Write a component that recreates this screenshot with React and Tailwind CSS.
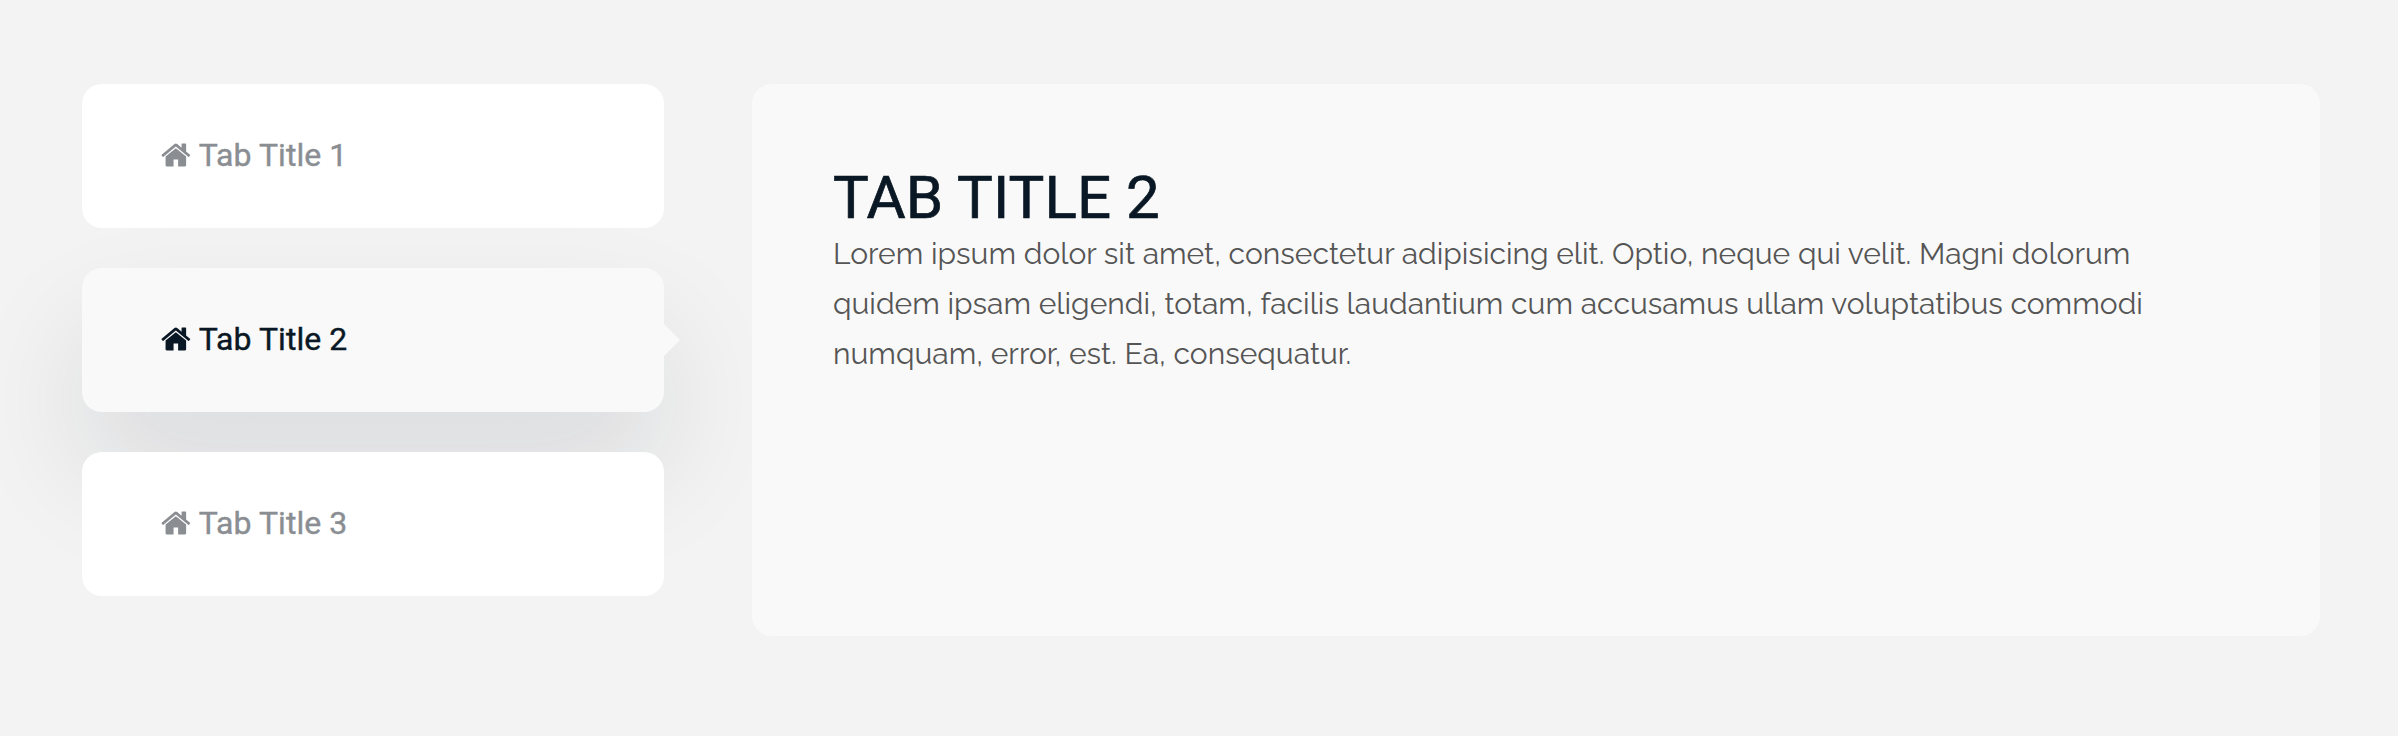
const tabs = ["Tab Title 1", "Tab Title 2", "Tab Title 3"];

function HomeIcon() {
  return (
    <svg viewBox="64 0 1664 1792" className="h-8 w-[29.7px] shrink-0" fill="currentColor" aria-hidden="true">
      <path d="M1472 992v480q0 26-19 45t-45 19h-384v-384h-256v384h-384q-26 0-45-19t-19-45v-480q0-1 .5-3t.5-3l575-474 575 474q1 2 1 6zm223-69l-62 74q-8 9-21 11h-3q-13 0-21-7l-692-577-692 577q-12 8-24 7-13-2-21-11l-62-74q-8-10-7-23.5t11-21.5l719-599q32-26 76-26t76 26l244 204v-195q0-14 9-23t23-9h192q14 0 23 9t9 23v408l219 182q10 8 11 21.5t-7 23.5z" />
    </svg>
  );
}

function Tab({ title, active }) {
  return (
    <button
      type="button"
      className={
        active
          ? "relative flex h-36 items-center gap-2 rounded-[20px] bg-[#f9f9f9] pl-[79px] pr-20 pb-[3px] text-[#091824] shadow-[0_60px_120px_0_rgba(14,26,46,0.11)]"
          : "relative flex h-36 items-center gap-2 rounded-[20px] bg-white pl-[79px] pr-20 pb-[3px] text-[#8a8e93]"
      }
    >
      <HomeIcon />
      <span className="font-['Roboto',sans-serif] text-[32px] leading-[38px] tracking-[0.05px] [-webkit-text-stroke:0.4px_currentColor]">{title}</span>
      {active && (
        <svg viewBox="0 0 16 32" className="absolute left-full top-14 h-8 w-4" aria-hidden="true">
          <path d="M0 0L16 16L0 32Z" fill="#f9f9f9" />
        </svg>
      )}
    </button>
  );
}

export default function App() {
  return (
    <div className="flex h-[736px] items-start gap-[88px] overflow-hidden bg-[#f3f3f3] pl-[82px] pt-[84px]">
      <div className="flex w-[582px] flex-col gap-10">
        {tabs.map((title, i) => (
          <Tab key={title} title={title} active={i === 1} />
        ))}
      </div>
      <div className="relative h-[552px] w-[1568px] rounded-[20px] bg-[#f9f9f9] pl-[81px] pr-20 pt-[81px]">
        <h2 className="font-['Roboto',sans-serif] text-[60px] leading-[66px] tracking-[0.1px] text-[#091824] [-webkit-text-stroke:0.7px_currentColor]">TAB TITLE 2</h2>
        <p className="-mt-0.5 font-['Raleway',sans-serif] text-[30px] leading-[50px] tracking-[0.02px] text-[#555]">
          Lorem ipsum dolor sit amet, consectetur adipisicing elit. Optio, neque qui velit. Magni dolorum quidem ipsam eligendi, totam, facilis laudantium cum accusamus ullam voluptatibus commodi numquam, error, est. Ea, consequatur.
        </p>
      </div>
    </div>
  );
}
